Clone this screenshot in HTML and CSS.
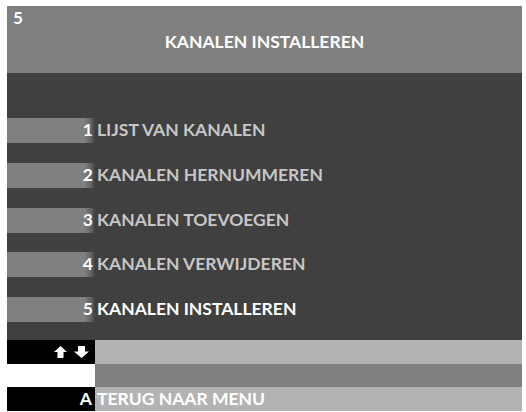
FILE: index.html
```html
<!DOCTYPE html>
<html>
<head>
<meta charset="utf-8">
<link rel="stylesheet" href="styles.css">
</head>
<body>
<div class="screen">
  <div class="header">
    <div class="page">5</div>
    <div class="title">KANALEN INSTALLEREN</div>
  </div>
  <div class="menu">
    <div class="item"><div class="bar">1</div><div class="label">LIJST VAN KANALEN</div></div>
    <div class="item"><div class="bar">2</div><div class="label">KANALEN HERNUMMEREN</div></div>
    <div class="item"><div class="bar">3</div><div class="label">KANALEN TOEVOEGEN</div></div>
    <div class="item"><div class="bar">4</div><div class="label">KANALEN VERWIJDEREN</div></div>
    <div class="item selected"><div class="bar">5</div><div class="label">KANALEN INSTALLEREN</div></div>
  </div>
  <div class="footer">
    <div class="frow">
      <div class="key black">
        <svg class="arrows" width="38" height="14" viewBox="0 0 38 14">
          <path d="M7.5 1 L14 7 L10.5 7 L10.5 13 L4.5 13 L4.5 7 L1 7 Z" fill="#fff"/>
          <path d="M28.5 13 L36 6.5 L32 6.5 L32 1 L25 1 L25 6.5 L21 6.5 Z" fill="#fff"/>
        </svg>
      </div>
      <div class="fbar light"></div>
    </div>
    <div class="frow">
      <div class="key white"></div>
      <div class="fbar mid"></div>
    </div>
    <div class="frow">
      <div class="key black">A</div>
      <div class="fbar light">TERUG NAAR MENU</div>
    </div>
  </div>
</div>
</body>
</html>
```
FILE: styles.css
```css
html, body {
  margin: 0;
  padding: 0;
  background: #ffffff;
}
body {
  font-family: "Lato", "Liberation Sans", sans-serif;
}
.screen {
  margin: 6px 0 0 7px;
  width: 515px;
  display: flex;
  flex-direction: column;
}
.header {
  height: 67px;
  background: #808080;
  color: #ffffff;
  position: relative;
}
.page {
  position: absolute;
  left: 6px;
  top: 1px;
  font-size: 17px;
  font-weight: 700;
}
.title {
  text-align: center;
  padding-top: 25px;
  font-size: 17.5px;
  font-weight: 700;
}
.menu {
  height: 267px;
  background: #404040;
  box-sizing: border-box;
  padding-top: 45px;
  display: flex;
  flex-direction: column;
  gap: 19.75px;
}
.item {
  display: flex;
  height: 25px;
  color: #c6c6c6;
  font-size: 17.5px;
  font-weight: 700;
  line-height: 23px;
}
.item .bar {
  width: 88px;
  height: 25px;
  box-sizing: border-box;
  padding-right: 2px;
  background: linear-gradient(to right, #808080 88%, #606060 96%, #404040);
  color: #ffffff;
  text-align: right;
}
.item .label {
  padding-left: 2px;
}
.item.selected .label {
  color: #ffffff;
}
.footer {
  display: flex;
  flex-direction: column;
}
.frow {
  display: flex;
  height: 23.5px;
}
.key {
  width: 88px;
  box-sizing: border-box;
  padding-right: 3px;
  display: flex;
  align-items: center;
  justify-content: flex-end;
  color: #ffffff;
  font-size: 17.5px;
  font-weight: 700;
}
.arrows {
  margin-right: 1px;
}
.black { background: #000000; }
.white { background: #ffffff; }
.fbar {
  flex: 1;
  display: flex;
  align-items: center;
  padding-left: 2px;
  color: #ffffff;
  font-size: 17.5px;
  font-weight: 700;
}
.light { background: #b3b3b3; }
.mid { background: #808080; }
```
